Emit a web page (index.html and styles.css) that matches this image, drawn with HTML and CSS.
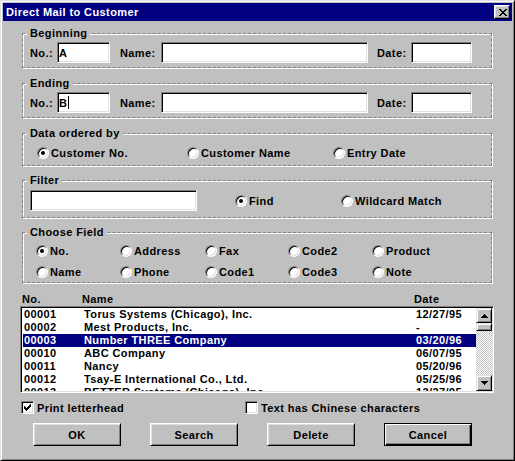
FILE: index.html
```html
<!doctype html>
<html lang="en">
<head>
	<meta charset="UTF-8">
	<title>Direct Mail to Customer</title>
	<link rel="stylesheet" href="styles.css">
</head>
<body>
	<div class="window">
		<div class="titlebar">
			<span class="title">Direct Mail to Customer</span>
			<span class="btn-close">
				<svg width="8" height="7" viewBox="0 0 8 7" shape-rendering="crispEdges"><path d="M0 0h2v1H0zM6 0h2v1H6zM1 1h2v1H1zM5 1h2v1H5zM2 2h4v1H2zM3 3h2v1H3zM2 4h4v1H2zM1 5h2v1H1zM5 5h2v1H5zM0 6h2v1H0zM6 6h2v1H6z" fill="#000"/></svg>
			</span>
		</div>
		<div class="content">
			<fieldset class="grp grp-range">
				<legend>Beginning</legend>
				<div class="range-row">
					<span class="lbl lbl-no">No.:</span><div class="edit edit-no">A</div>
					<span class="lbl lbl-name">Name:</span><div class="edit edit-name"></div>
					<span class="lbl lbl-date">Date:</span><div class="edit edit-date"></div>
				</div>
			</fieldset>
			<fieldset class="grp grp-range gap9">
				<legend>Ending</legend>
				<div class="range-row">
					<span class="lbl lbl-no">No.:</span><div class="edit edit-no">B<span class="caret"></span></div>
					<span class="lbl lbl-name">Name:</span><div class="edit edit-name"></div>
					<span class="lbl lbl-date">Date:</span><div class="edit edit-date"></div>
				</div>
			</fieldset>
			<fieldset class="grp grp-order gap9">
				<legend>Data ordered by</legend>
				<div class="order-row">
					<label class="opt"><span class="radio on"></span>Customer No.</label>
					<label class="opt"><span class="radio"></span>Customer Name</label>
					<label class="opt"><span class="radio"></span>Entry Date</label>
				</div>
			</fieldset>
			<fieldset class="grp grp-filter gap8">
				<legend>Filter</legend>
				<div class="filter-row">
					<div class="edit edit-filter"></div>
					<label class="opt opt-find"><span class="radio on"></span>Find</label>
					<label class="opt"><span class="radio"></span>Wildcard Match</label>
				</div>
			</fieldset>
			<fieldset class="grp grp-field gap8">
				<legend>Choose Field</legend>
				<div class="field-grid">
					<label class="opt"><span class="radio on"></span>No.</label>
					<label class="opt"><span class="radio"></span>Address</label>
					<label class="opt"><span class="radio"></span>Fax</label>
					<label class="opt"><span class="radio"></span>Code2</label>
					<label class="opt"><span class="radio"></span>Product</label>
					<label class="opt"><span class="radio"></span>Name</label>
					<label class="opt"><span class="radio"></span>Phone</label>
					<label class="opt"><span class="radio"></span>Code1</label>
					<label class="opt"><span class="radio"></span>Code3</label>
					<label class="opt"><span class="radio"></span>Note</label>
				</div>
			</fieldset>

			<div class="list-head">
				<span>No.</span><span>Name</span><span>Date</span>
			</div>
			<div class="listbox">
				<div class="rows">
					<div class="row"><span>00001</span><span>Torus Systems (Chicago), Inc.</span><span>12/27/95</span></div>
					<div class="row"><span>00002</span><span>Mest Products, Inc.</span><span>-</span></div>
					<div class="row sel"><span>00003</span><span>Number THREE Company</span><span>03/20/96</span></div>
					<div class="row"><span>00010</span><span>ABC Company</span><span>06/07/95</span></div>
					<div class="row"><span>00011</span><span>Nancy</span><span>05/20/96</span></div>
					<div class="row"><span>00012</span><span>Tsay-E International Co., Ltd.</span><span>05/25/96</span></div>
					<div class="row"><span>00013</span><span>BETTER Systems (Chicago), Inc.</span><span>12/27/95</span></div>
				</div>
				<div class="vscroll">
					<div class="sbtn sbtn-up">
						<svg width="7" height="4" viewBox="0 0 7 4" shape-rendering="crispEdges"><path d="M3 0h1v1H3zM2 1h3v1H2zM1 2h5v1H1zM0 3h7v1H0z" fill="#000"/></svg>
					</div>
					<div class="sbtn thumb"></div>
					<div class="track"></div>
					<div class="sbtn sbtn-down">
						<svg width="7" height="4" viewBox="0 0 7 4" shape-rendering="crispEdges"><path d="M0 0h7v1H0zM1 1h5v1H1zM2 2h3v1H2zM3 3h1v1H3z" fill="#000"/></svg>
					</div>
				</div>
			</div>

			<div class="checks">
				<label class="chk-item"><span class="chk"><svg width="11" height="11" viewBox="0 0 11 11" shape-rendering="crispEdges"><path d="M8 2h1v1H8zM7 3h2v1H7zM2 4h1v1H2zM6 4h3v1H6zM2 5h2v1H2zM5 5h3v1H5zM2 6h5v1H2zM3 7h3v1H3zM4 8h1v1H4z" fill="#000"/></svg></span>Print letterhead</label>
				<label class="chk-item"><span class="chk"></span>Text has Chinese characters</label>
			</div>

			<div class="buttons">
				<button class="btn">OK</button>
				<button class="btn">Search</button>
				<button class="btn">Delete</button>
				<button class="btn btn-default">Cancel</button>
			</div>
		</div>
	</div>
</body>
</html>
```

FILE: styles.css
```css
*{ box-sizing: border-box;}
body{ margin: 0; background: #c0c0c0; color: #000; font: bold 11px "Liberation Sans", Arial, sans-serif; letter-spacing: 0.4px;}

/* window frame */
.window{ width: 515px; height: 461px; padding: 2px; border: 1px solid; border-color: #dfdfdf #000 #000 #dfdfdf; box-shadow: inset 1px 1px #fff, inset -1px -1px #808080;}
.titlebar{ height: 18px; background: #000080; color: #fff; display: flex; align-items: center; justify-content: space-between; padding: 0 2px 0 3px;}
.btn-close{ width: 16px; height: 14px; display: flex; align-items: center; justify-content: center; background: #c0c0c0; border: 1px solid; border-color: #fff #000 #000 #fff; box-shadow: inset -1px -1px #808080, inset 1px 1px #dfdfdf; padding-left: 1px;}
.content{ display: flex; flex-direction: column; padding: 6px 20px 0 19px;}

/* group boxes */
.grp{ margin: 0; padding: 2px 7px 4px; min-width: 0; border: 1px dashed #808080; box-shadow: 1px 1px #fff, inset 1px 1px #fff;}
.grp legend{ line-height: 13px; padding: 0 3px; margin-left: -3px; background: #c0c0c0;}
.gap9{ margin-top: 9px;}
.gap8{ margin-top: 8px;}
.grp-order{ padding: 6px 7px 5px;}
.grp-filter{ padding: 3px 7px 6px;}
.grp-field{ padding: 5px 7px 3px;}

.edit{ height: 21px; background: #fff; display: flex; align-items: center; padding-left: 1px; border: 1px solid; border-color: #808080 #fff #fff #808080; box-shadow: inset 1px 1px #000, inset -1px -1px #dfdfdf;}
.caret{ display: inline-block; width: 1px; height: 13px; background: #000; margin-left: 1px;}

.range-row{ display: flex; align-items: center;}
.lbl-no{ width: 27px;}
.edit-no{ width: 53px;}
.lbl-name{ width: 41px; margin-left: 10px;}
.edit-name{ width: 207px;}
.lbl-date{ width: 34px; margin-left: 9px;}
.edit-date{ width: 61px;}

/* radios */
.opt{ display: flex; align-items: center; gap: 2px; height: 14px; white-space: nowrap;}
.radio{ position: relative; width: 12px; height: 12px; border-radius: 50%; background: #fff; border: 1px solid; border-color: #808080 #fff #fff #808080; box-shadow: inset 1px 1px #000, inset -1px -1px #dfdfdf;}
.radio.on::after{ content: ""; position: absolute; left: 3px; top: 3px; width: 4px; height: 4px; border-radius: 50%; background: #000;}

.order-row{ display: grid; grid-template-columns: 150px 146px auto; padding-left: 7px;}
.filter-row{ display: flex; align-items: center;}
.edit-filter{ width: 167px;}
.opt-find{ margin-left: 38px; width: 106px;}
.field-grid{ display: grid; grid-template-columns: 84px 85px 83px 84px auto; row-gap: 7px; padding-left: 6px;}

/* list */
.list-head{ display: grid; grid-template-columns: 60px 332px auto; margin-top: 10px; line-height: 12px;}
.listbox{ display: flex; height: 87px; margin: 1px -2px 0; background: #fff; border: 1px solid; border-color: #808080 #fff #fff #808080; box-shadow: inset 1px 1px #000, inset -1px -1px #dfdfdf; padding: 1px;}
.rows{ flex: 1; overflow: hidden; padding-left: 1px;}
.row{ display: grid; grid-template-columns: 60px 332px auto; line-height: 13px; height: 13px; white-space: nowrap; padding-left: 1px;}
.row.sel{ background: #000080; color: #fff;}
.vscroll{ width: 16px; display: flex; flex-direction: column;}
.sbtn{ background: #c0c0c0; display: flex; align-items: center; justify-content: center; border: 1px solid; border-color: #dfdfdf #000 #000 #dfdfdf; box-shadow: inset 1px 1px #fff, inset -1px -1px #808080;}
.sbtn-up{ height: 15px;}
.thumb{ height: 8px;}
.sbtn-down{ height: 16px;}
.track{ flex: 1; background: repeating-conic-gradient(#c0c0c0 0 25%, #fff 0 50%) 0 0/2px 2px;}

/* checkboxes */
.checks{ display: grid; grid-template-columns: 224px auto; margin: 8px 0 0 -1px; height: 13px;}
.chk-item{ display: flex; align-items: center; gap: 3px; white-space: nowrap;}
.chk{ width: 13px; height: 13px; background: #fff; border: 1px solid; border-color: #808080 #fff #fff #808080; box-shadow: inset 1px 1px #000, inset -1px -1px #dfdfdf;}
.chk svg{ display: block;}

/* buttons */
.buttons{ display: flex; gap: 29px; margin-top: 9px; padding-left: 11px;}
.btn{ width: 88px; height: 23px; padding: 0; font: inherit; letter-spacing: inherit; color: #000; background: #c0c0c0; border: 1px solid; border-color: #fff #000 #000 #fff; box-shadow: inset 1px 1px #dfdfdf, inset -1px -1px #808080;}
.btn-default{ border-color: #000; box-shadow: inset 1px 1px #fff, inset -1px -1px #000, inset -2px -2px #808080;}
```
